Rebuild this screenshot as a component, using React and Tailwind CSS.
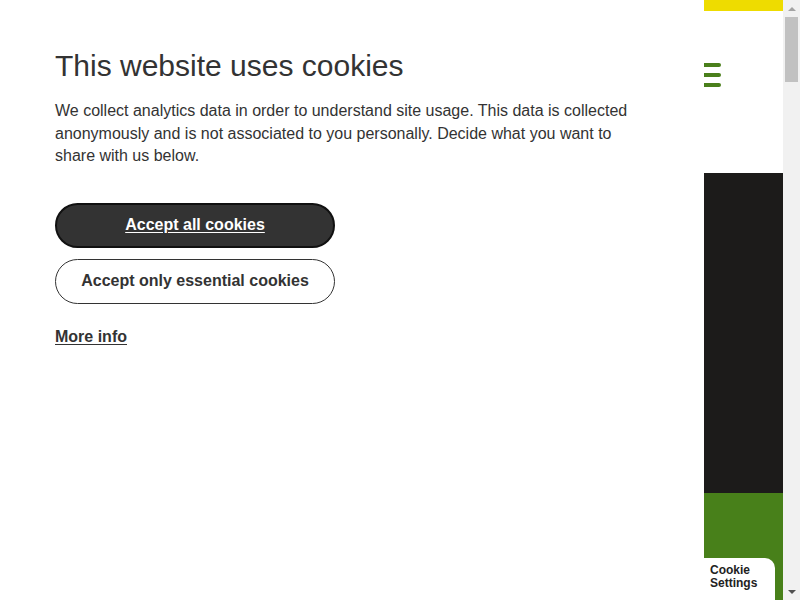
export default function App() {
  return (
    <div className="flex h-[600px] w-[800px] overflow-hidden bg-white font-['Liberation_Sans',Arial,sans-serif] text-[#333]">
      {/* cookie panel */}
      <div className="w-[704px] shrink-0 bg-white pl-[55px] pr-[60px] pt-[48px]">
        <h1 className="text-[30px] leading-[36px] font-normal text-[#333]">This website uses cookies</h1>
        <p className="mt-[16px] text-[16px] leading-[22.5px] text-[#333]">
          We collect analytics data in order to understand site usage. This data is collected anonymously and is not associated to you personally. Decide what you want to share with us below.
        </p>
        <div className="mt-[35px] flex flex-col gap-[11px]">
          <button className="h-[45px] w-[280px] rounded-full border-2 border-[#111] bg-[#333] text-[16px] font-bold text-white underline underline-offset-2">
            Accept all cookies
          </button>
          <button className="h-[45px] w-[280px] rounded-full border border-[#333] bg-white text-[16px] font-bold text-[#333]">
            Accept only essential cookies
          </button>
        </div>
        <a href="#" className="mt-[21px] inline-block text-[16px] font-bold text-[#333] underline underline-offset-2">
          More info
        </a>
      </div>

      {/* page behind */}
      <div className="relative flex w-[79px] shrink-0 flex-col">
        <div className="h-[11px] bg-[#eedc00]" />
        <div className="flex h-[162px] flex-col gap-[6px] bg-white pt-[52px]">
          <span className="block h-[4px] w-[17px] rounded-r-sm bg-[#4a7f1b]" />
          <span className="block h-[4px] w-[17px] rounded-r-sm bg-[#4a7f1b]" />
          <span className="block h-[4px] w-[17px] rounded-r-sm bg-[#4a7f1b]" />
        </div>
        <div className="h-[320px] bg-[#1c1b1a]" />
        <div className="flex-1 bg-[#48801a]" />
        <div className="absolute bottom-0 left-0 w-[71px] rounded-tr-[10px] bg-white px-[6px] pt-[6px] pb-[10px] text-[12px] font-bold leading-[13px] text-[#222]">
          Cookie<br />Settings
        </div>
      </div>

      {/* scrollbar */}
      <div className="flex w-[17px] shrink-0 flex-col bg-[#f1f1f1]">
        <div className="flex h-[17px] items-center justify-center">
          <span className="h-0 w-0 border-x-[4px] border-b-[4px] border-x-transparent border-b-[#a3a3a3]" />
        </div>
        <div className="mx-[2px] h-[65px] bg-[#c1c1c1]" />
        <div className="flex-1" />
        <div className="flex h-[17px] items-center justify-center">
          <span className="h-0 w-0 border-x-[4px] border-t-[4px] border-x-transparent border-t-[#505050]" />
        </div>
      </div>
    </div>
  );
}
